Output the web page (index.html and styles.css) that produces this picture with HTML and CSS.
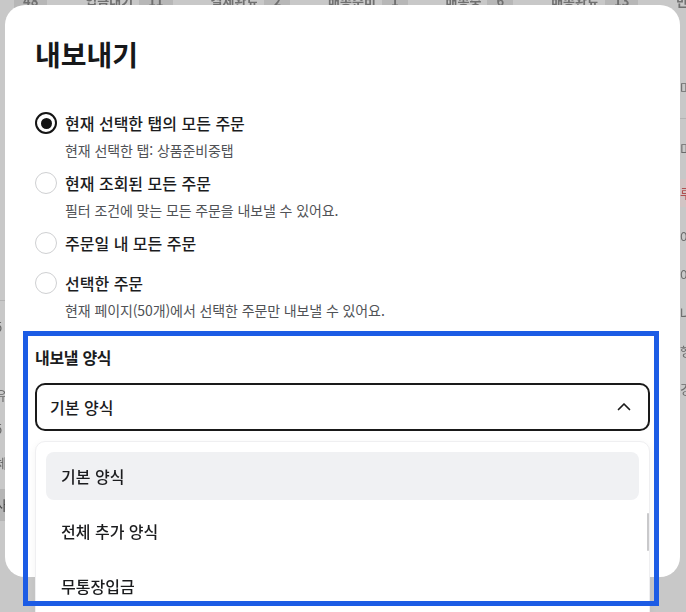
FILE: index.html
```html
<!DOCTYPE html>
<html lang="ko">
<head>
<meta charset="utf-8">
<title>내보내기</title>
<link rel="stylesheet" href="styles.css">
</head>
<body>
<div class="page">
  <div class="tabs">
    <span class="tab"><span class="badge">48</span></span>
    <span class="tab">입금대기 <span class="badge">11</span></span>
    <span class="tab">결제완료 <span class="badge">2</span></span>
    <span class="tab">배송준비 <span class="badge">1</span></span>
    <span class="tab">배송중 <span class="badge">6</span></span>
    <span class="tab">배송완료 <span class="badge">13</span></span>
    <span class="tab">반품</span>
  </div>
  <div class="bg-body">
    <div class="bg-left">
      <div class="bg-line"></div>
      <div class="bg-frag">5</div>
      <div class="bg-frag big">I</div>
      <div class="bg-frag">유</div>
      <div class="bg-frag">5</div>
      <div class="bg-frag">체</div>
      <div class="bg-frag dark">사</div>
    </div>
    <div class="bg-right">
      <div class="bg-frag">며</div>
      <div class="bg-line"></div>
      <div class="bg-frag">미</div>
      <div class="bg-frag pink">루</div>
      <div class="bg-frag">아</div>
      <div class="bg-frag">아</div>
      <div class="bg-frag">나</div>
      <div class="bg-frag">행</div>
      <div class="bg-frag">경</div>
    </div>
  </div>
</div>

<div class="modal" role="dialog" aria-labelledby="modal-title">
  <h1 class="title" id="modal-title">내보내기</h1>

  <div class="radio-group">
    <div class="option">
      <span class="radio checked"></span>
      <div class="opt-text">
        <div class="opt-label">현재 선택한 탭의 모든 주문</div>
        <div class="opt-sub">현재 선택한 탭: 상품준비중탭</div>
      </div>
    </div>
    <div class="option">
      <span class="radio"></span>
      <div class="opt-text">
        <div class="opt-label">현재 조회된 모든 주문</div>
        <div class="opt-sub">필터 조건에 맞는 모든 주문을 내보낼 수 있어요.</div>
      </div>
    </div>
    <div class="option single">
      <span class="radio"></span>
      <div class="opt-text">
        <div class="opt-label">주문일 내 모든 주문</div>
      </div>
    </div>
    <div class="option">
      <span class="radio"></span>
      <div class="opt-text">
        <div class="opt-label">선택한 주문</div>
        <div class="opt-sub">현재 페이지(50개)에서 선택한 주문만 내보낼 수 있어요.</div>
      </div>
    </div>
  </div>

  <section class="format">
    <div class="format-label">내보낼 양식</div>
    <div class="select">
      <span>기본 양식</span>
      <svg class="chevron" width="14" height="9" viewBox="0 0 14 9" aria-hidden="true">
        <path d="M1.5 7.5 L7 2 L12.5 7.5" fill="none" stroke="#1b1b1b" stroke-width="1.7" stroke-linecap="round" stroke-linejoin="round"/>
      </svg>
    </div>
    <div class="dropdown">
      <div class="dd-option active">기본 양식</div>
      <div class="dd-option">전체 추가 양식</div>
      <div class="dd-option">무통장입금</div>
      <div class="dd-option">택배 양식</div>
      <span class="scroll-thumb"></span>
    </div>
  </section>
</div>

<div class="frame"></div>
</body>
</html>
```

FILE: styles.css
```css
html, body {
  margin: 0;
  padding: 0;
}

body {
  width: 686px;
  height: 612px;
  overflow: hidden;
  background: #c7c7c7;
  font-family: "Noto Sans CJK KR", "Noto Sans", sans-serif;
  color: #1b1c1e;
}

/* dimmed page behind the dialog */
.page {
  position: fixed;
  inset: 0;
  background: #c8c8c8;
  color: #5e5e5e;
  font-size: 13px;
}

.tabs {
  display: flex;
  gap: 38px;
  margin-top: -10px;
  padding-left: 14px;
  height: 20px;
  align-items: center;
  white-space: nowrap;
  font-weight: 700;
  color: #707070;
}

.tab {
  display: flex;
  align-items: center;
  gap: 6px;
}

.badge {
  background: #b7b7b7;
  padding: 0 9px;
  border-radius: 3px;
}

.bg-body {
  display: flex;
  justify-content: space-between;
  height: 590px;
}

.bg-left,
.bg-right {
  display: flex;
  flex-direction: column;
  width: 10px;
}

.bg-left {
  padding-top: 290px;
  gap: 18px;
  margin-left: -5px;
}

.bg-right {
  padding-top: 70px;
  gap: 22px;
  width: 14px;
  margin-right: -8px;
}

.bg-line {
  height: 1px;
  background: #b3b3b3;
}

.bg-frag {
  font-size: 13px;
  line-height: 16px;
  color: #6a6a6a;
}

.bg-frag.big {
  font-size: 18px;
  color: #444;
}

.bg-frag.dark {
  background: #b5b5b5;
  color: #444;
  padding: 8px 0;
}

.bg-frag.pink {
  background: #d2c4c4;
  color: #b05050;
  padding: 6px 0;
}

/* dialog */
.modal {
  position: absolute;
  left: 5px;
  top: 5px;
  width: 675px;
  height: 572px;
  box-sizing: border-box;
  padding: 31px 30px 0 30px;
  background: #fff;
  border-radius: 20px;
}

.title {
  margin: 0;
  font-size: 28px;
  line-height: 36px;
  font-weight: 700;
  color: #17181a;
}

.radio-group {
  margin-top: 39px;
  display: flex;
  flex-direction: column;
  gap: 11px;
}

.option {
  display: grid;
  grid-template-columns: 22px 1fr;
  column-gap: 8px;
  align-items: start;
}

.option.single {
  padding-bottom: 5px;
}

.radio {
  width: 22px;
  height: 22px;
  margin-top: 1px;
  box-sizing: border-box;
  border: 1.5px solid #cfd0d2;
  border-radius: 50%;
  display: flex;
  align-items: center;
  justify-content: center;
}

.radio.checked {
  border: 2px solid #141414;
}

.radio.checked::after {
  content: "";
  width: 11px;
  height: 11px;
  border-radius: 50%;
  background: #141414;
}

.opt-label {
  font-size: 16px;
  line-height: 24px;
  font-weight: 500;
  color: #1b1c1e;
}

.opt-sub {
  margin-top: 5px;
  font-size: 14px;
  line-height: 20px;
  color: #505256;
  letter-spacing: -0.1px;
}

.format {
  margin-top: 26px;
}

.format-label {
  font-size: 16px;
  line-height: 22px;
  font-weight: 700;
  color: #1b1c1e;
  letter-spacing: -0.3px;
}

.select {
  margin-top: 15px;
  height: 48px;
  box-sizing: border-box;
  border: 2px solid #1a1a1a;
  border-radius: 10px;
  padding: 0 17px 0 13px;
  display: flex;
  align-items: center;
  justify-content: space-between;
  font-size: 16px;
  font-weight: 500;
  color: #1b1c1e;
}

.chevron {
  display: block;
  margin-top: -2px;
}

.dropdown {
  position: relative;
  margin-top: 10px;
  height: 190px;
  overflow: hidden;
  box-sizing: border-box;
  padding: 10px 10px 0 10px;
  background: #fff;
  border: 1px solid #efeff1;
  border-radius: 10px;
  box-shadow: 0 2px 8px rgba(0, 0, 0, 0.05);
  display: flex;
  flex-direction: column;
  gap: 7px;
}

.dd-option {
  flex: none;
  height: 48px;
  display: flex;
  align-items: center;
  padding-left: 15px;
  border-radius: 8px;
  font-size: 16px;
  font-weight: 500;
  color: #1b1c1e;
}

.dd-option.active {
  background: #f0f1f3;
}

.scroll-thumb {
  position: absolute;
  right: 0;
  top: 71px;
  width: 2px;
  height: 38px;
  background: #c9c9cb;
  border-radius: 1px;
}

/* annotation frame */
.frame {
  position: absolute;
  left: 23px;
  top: 331px;
  width: 636px;
  height: 275px;
  box-sizing: border-box;
  border: 5px solid #1c5ce5;
  pointer-events: none;
}
```
